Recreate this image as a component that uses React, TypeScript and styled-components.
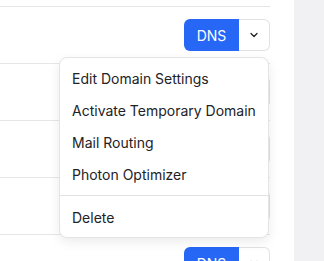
import styled, { createGlobalStyle } from "styled-components";

const GlobalStyle = createGlobalStyle`
  html, body {
    margin: 0;
    padding: 0;
    height: 100%;
    overflow: hidden;
    background: #ffffff;
    font-family: Inter, "Liberation Sans", sans-serif;
  }
`;

const MENU_ITEMS = [
  "Edit Domain Settings",
  "Activate Temporary Domain",
  "Mail Routing",
  "Photon Optimizer",
];

function ChevronDown() {
  return (
    <svg width="12" height="12" viewBox="0 0 24 24" fill="none" stroke="#222" strokeWidth="2.6" strokeLinecap="round" strokeLinejoin="round">
      <path d="M6 9l6 6 6-6" />
    </svg>
  );
}

interface RowProps {
  open?: boolean;
}

function DomainRow({ open }: RowProps) {
  return (
    <Row>
      <SplitButton>
        <MainButton>DNS</MainButton>
        <ToggleButton aria-label="More actions">
          <ChevronDown />
        </ToggleButton>
        {open && (
          <Menu>
            {MENU_ITEMS.map((item) => (
              <MenuItem key={item}>{item}</MenuItem>
            ))}
            <Separator />
            <MenuItem>Delete</MenuItem>
          </Menu>
        )}
      </SplitButton>
    </Row>
  );
}

export default function App() {
  return (
    <>
      <GlobalStyle />
      <Page>
        <Main>
          <List>
            <DomainRow open />
            <DomainRow />
            <DomainRow />
            <DomainRow />
            <DomainRow />
          </List>
        </Main>
        <SideStrip />
      </Page>
    </>
  );
}

const Page = styled.div`
  display: flex;
  width: 324px;
  height: 261px;
  overflow: hidden;
`;

const Main = styled.div`
  flex: 1;
  background: #ffffff;
  padding-right: 24px;
`;

const SideStrip = styled.div`
  width: 30px;
  background: #f1f1f3;
`;

const List = styled.div`
  padding-top: 6px;
  display: flex;
  flex-direction: column;
`;

const Row = styled.div`
  display: flex;
  justify-content: flex-end;
  align-items: center;
  padding: 12px 0;
  border-top: 1px solid #e6e6e8;
`;

const SplitButton = styled.div`
  position: relative;
  display: flex;
  height: 32px;
`;

const MainButton = styled.button`
  width: 55px;
  height: 32px;
  border: none;
  border-radius: 6px 0 0 6px;
  background: #2667f6;
  color: #ffffff;
  font-family: Inter, "Liberation Sans", sans-serif;
  font-size: 14px;
  padding: 0;
`;

const ToggleButton = styled.button`
  width: 31px;
  height: 32px;
  display: flex;
  align-items: center;
  justify-content: center;
  background: #ffffff;
  border: 1px solid #e2e2e4;
  border-left: none;
  border-radius: 0 6px 6px 0;
  padding: 0;
`;

const Menu = styled.div`
  position: absolute;
  top: calc(100% + 6px);
  right: 1px;
  z-index: 10;
  width: 210px;
  box-sizing: border-box;
  padding: 4px 0;
  background: #ffffff;
  border: 1px solid #e4e4e6;
  border-radius: 8px;
  box-shadow: 0 4px 12px rgba(0, 0, 0, 0.08);
`;

const MenuItem = styled.div`
  height: 32px;
  display: flex;
  align-items: center;
  padding: 0 12px;
  font-size: 14px;
  color: #222226;
  white-space: nowrap;
`;

const Separator = styled.div`
  height: 1px;
  margin: 5px 0;
  background: #e2e2e4;
`;
